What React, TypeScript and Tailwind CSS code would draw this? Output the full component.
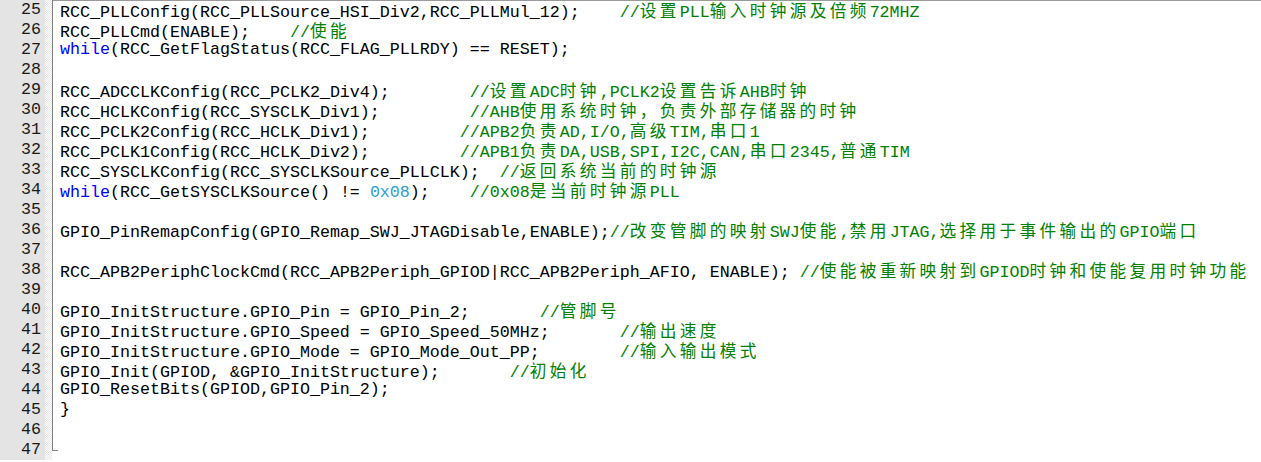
import React from 'react';

type Seg = [kind: 'k' | 'c' | 'w' | 'n', text: string];

const lines: { num: number; segs: Seg[] }[] = [
  { num: 25, segs: [['k', 'RCC_PLLConfig(RCC_PLLSource_HSI_Div2,RCC_PLLMul_12);    '], ['c', '//设置PLL输入时钟源及倍频72MHZ']] },
  { num: 26, segs: [['k', 'RCC_PLLCmd(ENABLE);    '], ['c', '//使能']] },
  { num: 27, segs: [['w', 'while'], ['k', '(RCC_GetFlagStatus(RCC_FLAG_PLLRDY) == RESET);']] },
  { num: 28, segs: [] },
  { num: 29, segs: [['k', 'RCC_ADCCLKConfig(RCC_PCLK2_Div4);        '], ['c', '//设置ADC时钟,PCLK2设置告诉AHB时钟']] },
  { num: 30, segs: [['k', 'RCC_HCLKConfig(RCC_SYSCLK_Div1);         '], ['c', '//AHB使用系统时钟，负责外部存储器的时钟']] },
  { num: 31, segs: [['k', 'RCC_PCLK2Config(RCC_HCLK_Div1);         '], ['c', '//APB2负责AD,I/O,高级TIM,串口1']] },
  { num: 32, segs: [['k', 'RCC_PCLK1Config(RCC_HCLK_Div2);         '], ['c', '//APB1负责DA,USB,SPI,I2C,CAN,串口2345,普通TIM']] },
  { num: 33, segs: [['k', 'RCC_SYSCLKConfig(RCC_SYSCLKSource_PLLCLK);  '], ['c', '//返回系统当前的时钟源']] },
  { num: 34, segs: [['w', 'while'], ['k', '(RCC_GetSYSCLKSource() != '], ['n', '0x08'], ['k', ');    '], ['c', '//0x08是当前时钟源PLL']] },
  { num: 35, segs: [] },
  { num: 36, segs: [['k', 'GPIO_PinRemapConfig(GPIO_Remap_SWJ_JTAGDisable,ENABLE);'], ['c', '//改变管脚的映射SWJ使能,禁用JTAG,选择用于事件输出的GPIO端口']] },
  { num: 37, segs: [] },
  { num: 38, segs: [['k', 'RCC_APB2PeriphClockCmd(RCC_APB2Periph_GPIOD|RCC_APB2Periph_AFIO, ENABLE); '], ['c', '//使能被重新映射到GPIOD时钟和使能复用时钟功能']] },
  { num: 39, segs: [] },
  { num: 40, segs: [['k', 'GPIO_InitStructure.GPIO_Pin = GPIO_Pin_2;       '], ['c', '//管脚号']] },
  { num: 41, segs: [['k', 'GPIO_InitStructure.GPIO_Speed = GPIO_Speed_50MHz;       '], ['c', '//输出速度']] },
  { num: 42, segs: [['k', 'GPIO_InitStructure.GPIO_Mode = GPIO_Mode_Out_PP;        '], ['c', '//输入输出模式']] },
  { num: 43, segs: [['k', 'GPIO_Init(GPIOD, &GPIO_InitStructure);       '], ['c', '//初始化']] },
  { num: 44, segs: [['k', 'GPIO_ResetBits(GPIOD,GPIO_Pin_2);']] },
  { num: 45, segs: [['k', '}']] },
  { num: 46, segs: [] },
  { num: 47, segs: [] },
];

const kindClass: Record<Seg[0], string> = {
  k: 'text-black',
  c: 'text-[#008000]',
  w: 'text-[#0000ff]',
  n: 'text-[#2aa0cf]',
};

// CJK glyphs take two monospace cells (20px) in the editor
function withWideChars(text: string) {
  return text.split(/([\u3000-\u9fff\uff00-\uffef]+)/).map((part, i) =>
    /[\u3000-\u9fff\uff00-\uffef]/.test(part) ? (
      <span key={i} className="tracking-[3.33px] font-['Noto_Sans_CJK_SC',sans-serif]">
        {part}
      </span>
    ) : (
      part
    )
  );
}

function Row({ num, segs, last }: { num: number; segs: Seg[]; last: boolean }) {
  return (
    <div className="flex h-[20px] leading-[20px]">
      <div className="w-[45px] shrink-0 bg-[#e4e4e4] pr-[4px] text-right text-[#1a1a1a]">{num}</div>
      <div className="w-[7px] shrink-0 bg-[repeating-conic-gradient(#e6e6e6_0%_25%,#ffffff_0%_50%)] bg-[length:2px_2px]" />
      <div className="w-[8px] shrink-0">
        {last ? (
          <div className="h-[11px] w-[6px] border-b border-l border-[#808080]" />
        ) : (
          <div className="h-full border-l border-[#808080]" />
        )}
      </div>
      <div className="whitespace-pre">
        {segs.map(([kind, text], i) => (
          <span key={i} className={kindClass[kind]}>
            {withWideChars(text)}
          </span>
        ))}
      </div>
    </div>
  );
}

export default function App() {
  return (
    <div className="h-[462px] w-[1261px] overflow-hidden bg-white font-['Liberation_Mono','Noto_Sans_CJK_SC',monospace] text-[16.67px] shadow-[inset_0_1px_0_#9a9a9a]">
      {lines.map((l, i) => (
        <Row key={l.num} num={l.num} segs={l.segs} last={i === lines.length - 1} />
      ))}
    </div>
  );
}
